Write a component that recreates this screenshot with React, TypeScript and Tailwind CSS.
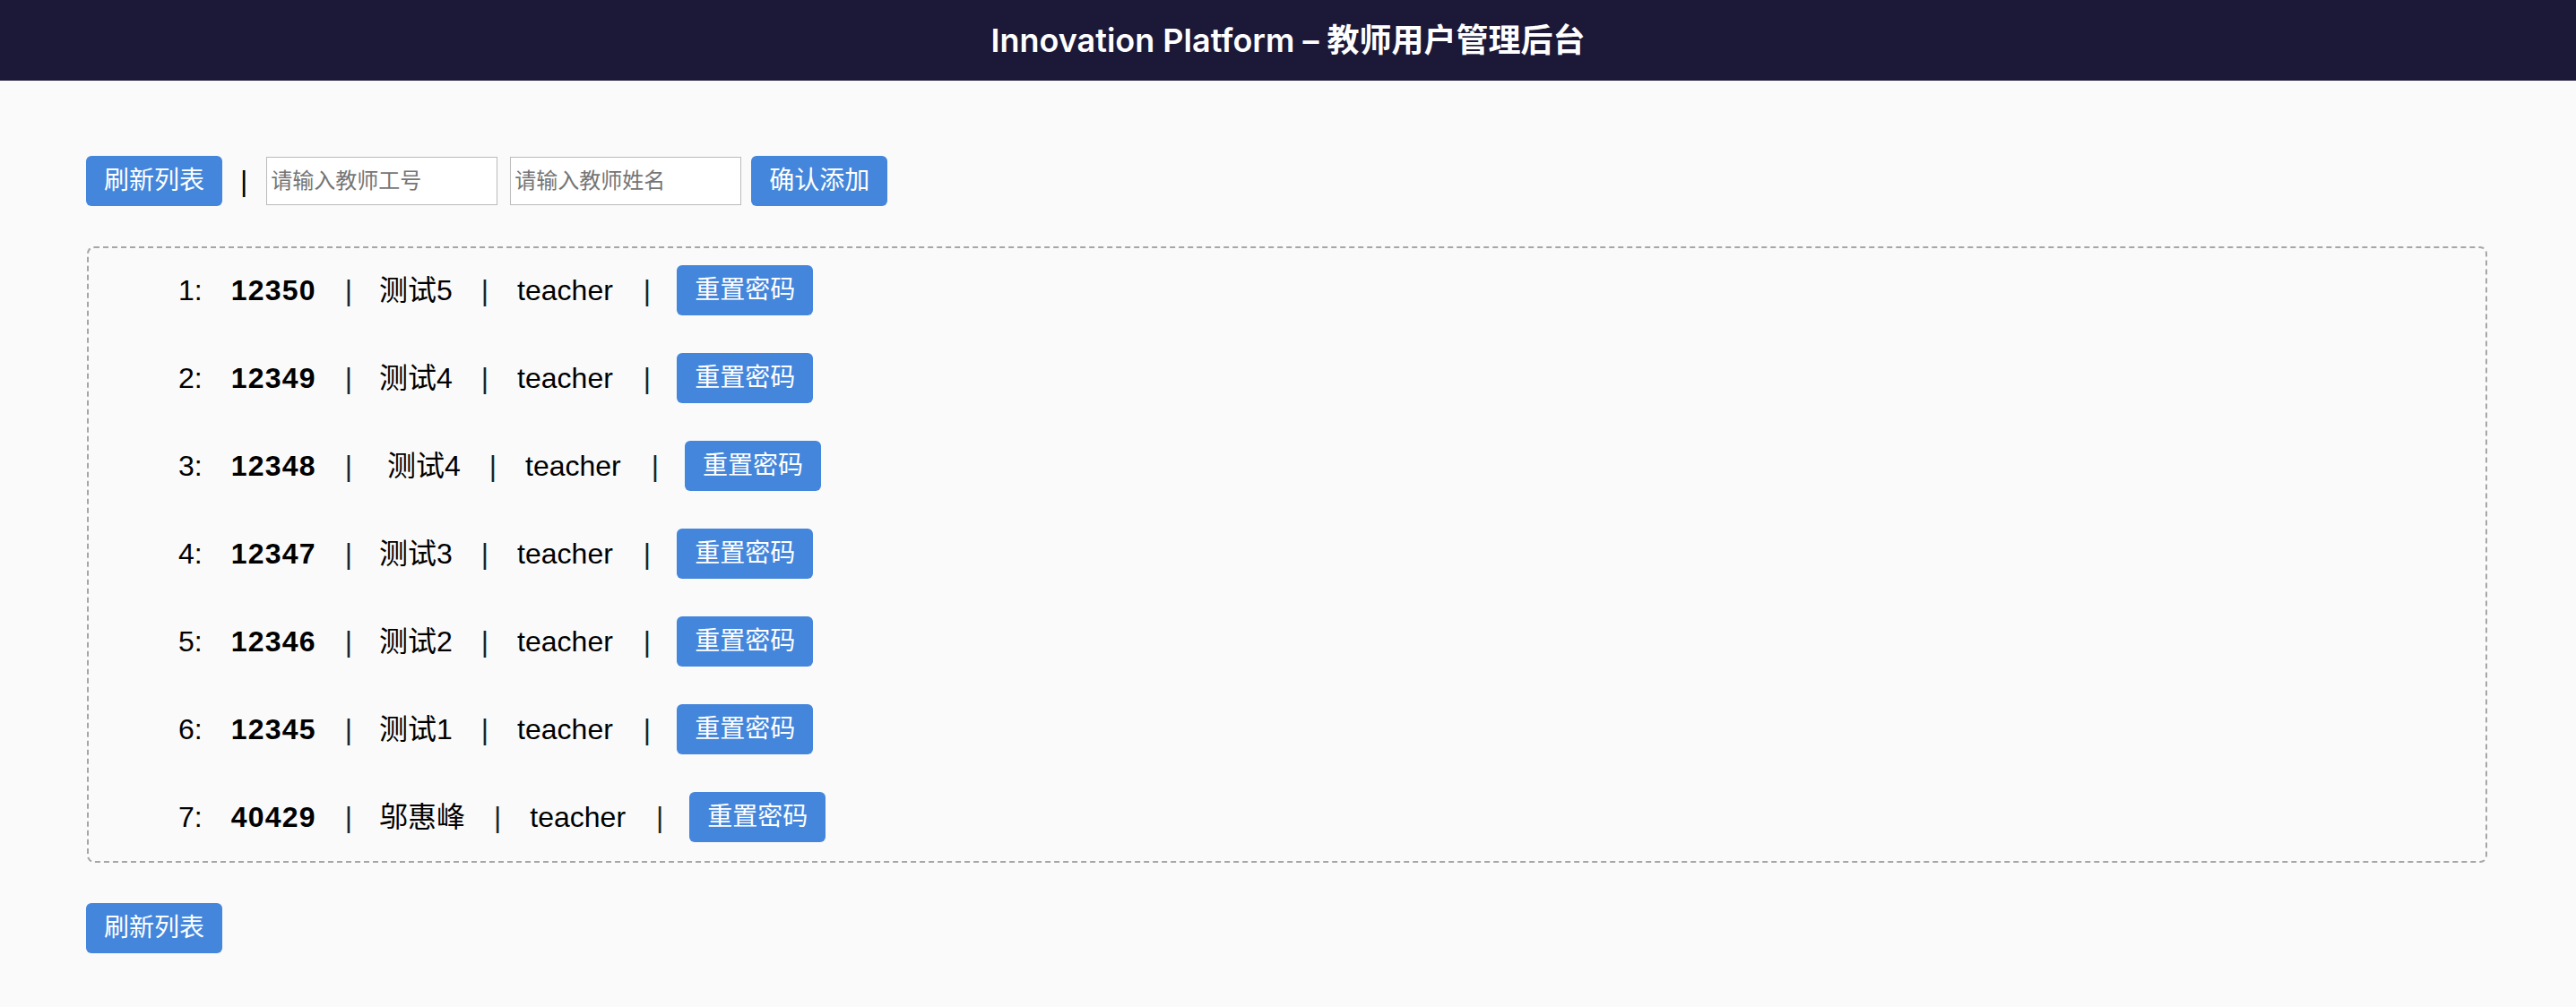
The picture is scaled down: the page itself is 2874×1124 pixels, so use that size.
import React from "react";

const rows = [
  { id: "12350", name: "测试5" },
  { id: "12349", name: "测试4" },
  { id: "12348", name: " 测试4" },
  { id: "12347", name: "测试3" },
  { id: "12346", name: "测试2" },
  { id: "12345", name: "测试1" },
  { id: "40429", name: "邬惠峰" },
];

const font = "font-['Liberation_Sans','Noto_Sans_CJK_SC',sans-serif]";

function Btn({ label }: { label: string }) {
  return (
    <button
      className={`w-[152px] h-[56px] shrink-0 rounded-[6px] bg-[#4386db] text-white text-[28px] leading-none ${font}`}
    >
      {label}
    </button>
  );
}

export default function App() {
  return (
    <div className={`min-h-screen bg-[#fafafa] ${font}`}>
      <header className="h-[90px] bg-[#1c1838] flex items-center justify-center">
        <h1 className="text-white text-[36px] font-semibold font-['Inter','Noto_Sans_CJK_SC',sans-serif] leading-none">
          Innovation Platform – 教师用户管理后台
        </h1>
      </header>
      <main className="pl-[96px] pr-[99px] pt-[84px]">
        <div className="flex items-center h-[56px]">
          <Btn label="刷新列表" />
          <span className="ml-[20px] text-[32px] leading-none text-black">|</span>
          <input
            className={`ml-[21px] w-[258px] h-[54px] bg-white border border-[#bbbbbb] px-[4px] text-[24px] placeholder:text-[#757575] outline-none ${font}`}
            placeholder="请输入教师工号"
          />
          <input
            className={`ml-[14px] w-[258px] h-[54px] bg-white border border-[#bbbbbb] px-[4px] text-[24px] placeholder:text-[#757575] outline-none ${font}`}
            placeholder="请输入教师姓名"
          />
          <div className="ml-[11px]">
            <Btn label="确认添加" />
          </div>
        </div>

        <div className="mt-[45px] ml-[1px] border-2 border-dashed border-[#a6a6a6] rounded-[8px] pt-[19px] pb-[21px] pl-[100px] flex flex-col gap-[42px]">
          {rows.map((r, i) => (
            <div key={r.id} className="flex items-center h-[56px] text-[32px] text-black leading-none whitespace-pre">
              <span>{i + 1}:</span>
              <span className="ml-[32px] font-bold tracking-[1.2px]">{r.id}</span>
              <span className="ml-[32px] text-[#222]">|</span>
              <span className="ml-[30px]">{r.name}</span>
              <span className="ml-[32px] text-[#222]">|</span>
              <span className="ml-[32px]">teacher</span>
              <span className="ml-[34px] text-[#222]">|</span>
              <span className="ml-[29px]">
                <Btn label="重置密码" />
              </span>
            </div>
          ))}
        </div>

        <div className="mt-[45px]">
          <Btn label="刷新列表" />
        </div>
      </main>
    </div>
  );
}
